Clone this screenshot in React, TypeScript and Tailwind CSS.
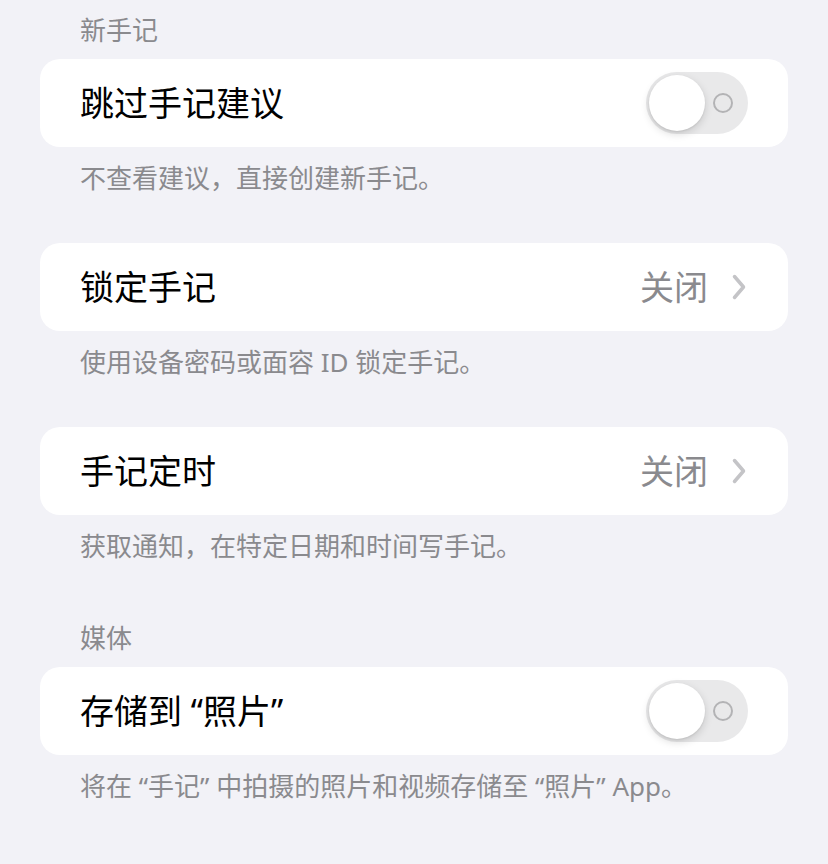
const font = { fontFamily: '"Noto Sans", "Noto Sans CJK SC", sans-serif' };

const Toggle = () => (
  <div className="relative h-[62px] w-[102px] rounded-full bg-[#e9e9ea]">
    <div className="absolute left-[3px] top-[3px] h-[56px] w-[56px] rounded-full bg-white shadow-[0_3px_8px_rgba(0,0,0,0.15),0_1px_2px_rgba(0,0,0,0.08)]" />
    <div className="absolute left-[67px] top-[21px] h-[20px] w-[20px] rounded-full border-[2px] border-[#b3b3b5]" />
  </div>
);

const Chevron = () => (
  <svg width="14" height="26" viewBox="0 0 14 26" fill="none">
    <path d="M2.5 2.5 L11.5 13 L2.5 23.5" stroke="#c4c4c7" strokeWidth="3.5" strokeLinecap="round" strokeLinejoin="round" />
  </svg>
);

const Row = ({ label, right }: { label: string; right: React.ReactNode }) => (
  <div className="flex h-[88px] items-center justify-between rounded-[20px] bg-white pl-[40px] pr-[40px]">
    <span className="text-[34px] leading-none text-black">{label}</span>
    {right}
  </div>
);

const Value = ({ text }: { text: string }) => (
  <div className="flex items-center gap-[24px] pr-[2px]">
    <span className="text-[34px] leading-none text-[#8a8a8e]">{text}</span>
    <Chevron />
  </div>
);

const Header = ({ text }: { text: string }) => (
  <div className="mb-[12px] h-[34px] pl-[40px] text-[26px] leading-[34px] text-[#8a8a8e]">{text}</div>
);

const Footer = ({ text }: { text: string }) => (
  <div className="mt-[14px] h-[34px] pl-[40px] text-[26px] leading-[34px] text-[#8a8a8e]">{text}</div>
);

export default function App() {
  return (
    <div className="min-h-[864px] w-[828px] bg-[#f2f2f7] px-[40px] pt-[13px]" style={font}>
      <section>
        <Header text="新手记" />
        <Row label="跳过手记建议" right={<Toggle />} />
        <Footer text="不查看建议，直接创建新手记。" />
      </section>

      <section className="mt-[48px]">
        <Row label="锁定手记" right={<Value text="关闭" />} />
        <Footer text="使用设备密码或面容 ID 锁定手记。" />
      </section>

      <section className="mt-[48px]">
        <Row label="手记定时" right={<Value text="关闭" />} />
        <Footer text="获取通知，在特定日期和时间写手记。" />
      </section>

      <section className="mt-[58px]">
        <Header text="媒体" />
        <Row label="存储到 “照片”" right={<Toggle />} />
        <Footer text="将在 “手记” 中拍摄的照片和视频存储至 “照片” App。" />
      </section>
    </div>
  );
}
